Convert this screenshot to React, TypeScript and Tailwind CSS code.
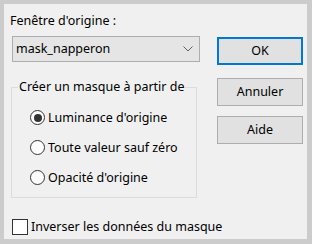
import React from 'react';

const font = { fontFamily: '"Segoe UI", "Noto Sans", "Open Sans", sans-serif' };

const Radio: React.FC<{ label: string; checked?: boolean }> = ({ label, checked }) => (
  <label className="flex items-center h-[15px] whitespace-nowrap">
    <span className="shrink-0 w-[15px] h-[15px] rounded-full border border-[#333333] bg-white flex items-center justify-center">
      {checked && <span className="w-[8px] h-[8px] rounded-full bg-[#333333]" />}
    </span>
    <span className="ml-[3px] text-[12.5px] leading-[15px] text-black">{label}</span>
  </label>
);

const Btn: React.FC<{ label: string; primary?: boolean }> = ({ label, primary }) => (
  <button
    className={
      primary
        ? 'w-[86px] h-[28px] bg-[#e1e1e1] border-2 border-[#0078d7] text-[12.5px] text-black'
        : 'w-[86px] h-[28px] bg-[#e1e1e1] border border-[#adadad] text-[12.5px] text-black'
    }
  >
    {label}
  </button>
);

export default function App() {
  return (
    <div className="w-[312px] h-[244px] bg-[#cccccc] pt-[4px] pl-[4px] pr-[5px] pb-[5px]" style={font}>
      <div className="w-full h-full bg-[#f0f0f0] flex">
        {/* left column */}
        <div className="w-[205px] pl-[8px] flex flex-col">
          <div className="mt-[9px] ml-[-2px] text-[12.5px] leading-[16px] text-black whitespace-nowrap">Fenêtre d'origine :</div>
          <div className="mt-[7px] w-[188px] h-[26px] bg-[#e5e5e5] border border-[#adadad] flex items-center justify-between pl-[3px] pr-[6px]">
            <span className="text-[12.5px] text-black">mask_napperon</span>
            <svg width="10" height="6" viewBox="0 0 10 6">
              <path d="M0.5 0.5 L5 5 L9.5 0.5" fill="none" stroke="#606060" strokeWidth="1" />
            </svg>
          </div>
          <fieldset className="mt-[17px] ml-[-1px] w-[186px] h-[119px] border border-[#dcdcdc] pt-[15px]">
            <legend className="ml-[6px] px-[1px] text-[12.5px] leading-[16px] text-black whitespace-nowrap">Créer un masque à partir de</legend>
            <div className="pl-[18px] flex flex-col gap-[15px]">
              <Radio label="Luminance d'origine" checked />
              <Radio label="Toute valeur sauf zéro" />
              <Radio label="Opacité d'origine" />
            </div>
          </fieldset>
          <label className="mt-[21px] flex items-center whitespace-nowrap">
            <span className="shrink-0 w-[16px] h-[16px] bg-white border border-[#333333]" />
            <span className="ml-[3px] text-[12.5px] leading-[16px] text-black">Inverser les données du masque</span>
          </label>
        </div>
        {/* right column */}
        <div className="pl-[8px] pt-[33px] flex flex-col gap-[13px]">
          <Btn label="OK" primary />
          <div className="flex flex-col gap-[10px]">
            <Btn label="Annuler" />
            <Btn label="Aide" />
          </div>
        </div>
      </div>
    </div>
  );
}
